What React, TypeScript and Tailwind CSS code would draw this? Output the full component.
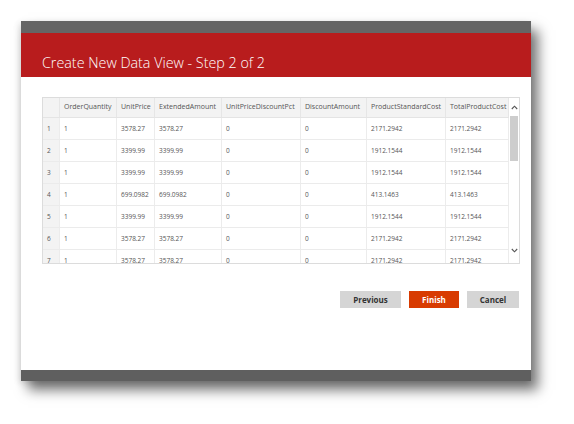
import React from "react";

const cols = [
  { name: "", w: 17 },
  { name: "OrderQuantity", w: 57 },
  { name: "UnitPrice", w: 38 },
  { name: "ExtendedAmount", w: 67 },
  { name: "UnitPriceDiscountPct", w: 79 },
  { name: "DiscountAmount", w: 66 },
  { name: "ProductStandardCost", w: 79 },
  { name: "TotalProductCost", w: 63 },
];

const rows = [
  ["1", "1", "3578.27", "3578.27", "0", "0", "2171.2942", "2171.2942"],
  ["2", "1", "3399.99", "3399.99", "0", "0", "1912.1544", "1912.1544"],
  ["3", "1", "3399.99", "3399.99", "0", "0", "1912.1544", "1912.1544"],
  ["4", "1", "699.0982", "699.0982", "0", "0", "413.1463", "413.1463"],
  ["5", "1", "3399.99", "3399.99", "0", "0", "1912.1544", "1912.1544"],
  ["6", "1", "3578.27", "3578.27", "0", "0", "2171.2942", "2171.2942"],
  ["7", "1", "3578.27", "3578.27", "0", "0", "2171.2942", "2171.2942"],
];

export default function App() {
  return (
    <div
      className="w-[574px] h-[424px] bg-white pl-[21px] pt-[21px] overflow-hidden"
      style={{ fontFamily: '"Open Sans", "Noto Sans", sans-serif' }}
    >
      <div className="w-[510px] flex flex-col bg-white shadow-[7px_9px_12px_rgba(0,0,0,0.55),-2px_2px_6px_rgba(0,0,0,0.12)]">
        <div className="h-[12px] bg-[#656565]" />
        <div className="h-[44px] bg-[#b81c1d] flex items-end pl-[21px] pb-[7px]">
          <span className="text-[14.3px] font-light text-white leading-none">
            Create New Data View - Step 2 of 2
          </span>
        </div>
        <div className="h-[293px] flex flex-col pl-[21px] pt-[20px]">
          <div className="w-[478px] h-[167px] shrink-0 border border-[#dcdcdc] flex overflow-hidden">
            <div className="flex flex-col">
              <div className="flex h-[20px] shrink-0 bg-[#f3f3f3] border-b border-[#e4e4e4]">
                {cols.map((c, i) => (
                  <div
                    key={i}
                    className="flex items-center pl-[4px] text-[7px] text-[#555] border-r border-[#e6e6e6] whitespace-nowrap overflow-hidden"
                    style={{ width: c.w }}
                  >
                    {c.name}
                  </div>
                ))}
              </div>
              {rows.map((r, ri) => (
                <div key={ri} className="flex h-[22px] shrink-0 border-b border-[#ebebeb]">
                  {r.map((v, ci) => (
                    <div
                      key={ci}
                      className={`flex items-center pl-[4px] text-[6.5px] text-[#555] border-r border-[#ececec] whitespace-nowrap ${ci === 0 ? "bg-[#f3f3f3]" : ""}`}
                      style={{ width: cols[ci].w }}
                    >
                      {v}
                    </div>
                  ))}
                </div>
              ))}
            </div>
            <div className="w-[10px] flex flex-col items-center">
              <div className="h-[18px] shrink-0 flex items-center justify-center">
                <svg width="7" height="5" viewBox="0 0 7 5">
                  <path d="M0.8 4 L3.5 1.2 L6.2 4" fill="none" stroke="#555" strokeWidth="1.1" />
                </svg>
              </div>
              <div className="w-[8px] h-[45px] shrink-0 bg-[#cdcdcd]" />
              <div className="flex-1" />
              <div className="h-[15px] shrink-0 flex items-start justify-center">
                <svg width="7" height="5" viewBox="0 0 7 5">
                  <path d="M0.8 1 L3.5 3.8 L6.2 1" fill="none" stroke="#555" strokeWidth="1.1" />
                </svg>
              </div>
            </div>
          </div>
          <div className="flex justify-end gap-[8px] pr-[12px] mt-[27px]">
            <button className="w-[61px] h-[17px] bg-[#d5d5d5] text-[8px] font-bold text-[#333] flex items-center justify-center">
              Previous
            </button>
            <button className="w-[50px] h-[17px] bg-[#d83b01] text-[8px] font-bold text-white flex items-center justify-center">
              Finish
            </button>
            <button className="w-[52px] h-[17px] bg-[#d5d5d5] text-[8px] font-bold text-[#333] flex items-center justify-center">
              Cancel
            </button>
          </div>
        </div>
        <div className="h-[11px] bg-[#5f5f5f]" />
      </div>
    </div>
  );
}
